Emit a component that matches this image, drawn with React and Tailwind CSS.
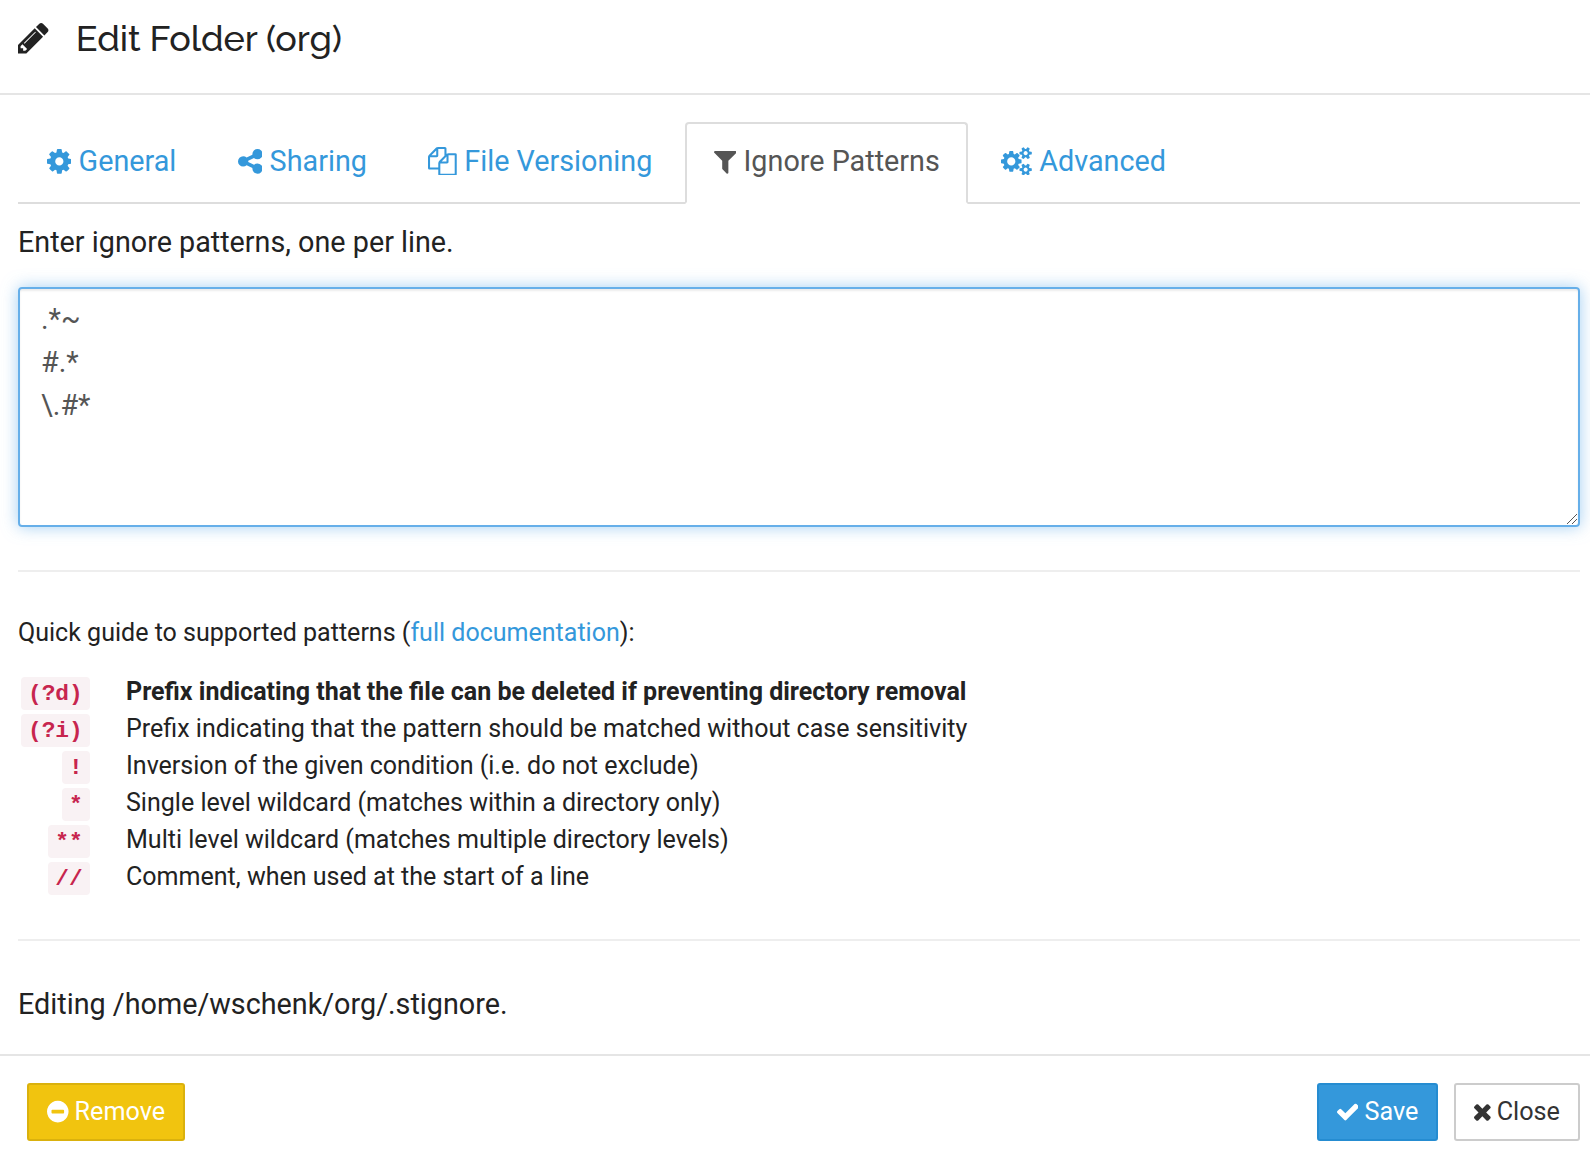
import React from 'react';

const ICONS = {
  pencil: {
    box: '128 0 1536 1792',
    d: 'M491 1536l91-91-235-235-91 91v107h128v128h107zm523-928q0-22-22-22-10 0-17 7l-542 542q-7 7-7 17 0 22 22 22 10 0 17-7l542-542q7-7 7-17zm-54-192l416 416-832 832h-416v-416zm683 96q0 53-37 90l-166 166-416-416 166-165q36-38 90-38 53 0 91 38l235 234q37 39 37 91z',
  },
  cog: {
    box: '128 0 1536 1792',
    d: 'M1152 896q0-106-75-181t-181-75-181 75-75 181 75 181 181 75 181-75 75-181zm512-109v222q0 12-8 23t-20 13l-185 28q-19 54-39 91 35 50 107 138 10 12 10 25t-9 23q-27 37-99 108t-94 71q-12 0-26-9l-138-108q-44 23-91 38-16 136-29 186-7 28-36 28h-222q-14 0-24.5-8.5t-11.5-21.5l-28-184q-49-16-90-37l-141 107q-10 9-25 9-14 0-25-11-126-114-165-168-7-10-7-23 0-12 8-23 15-21 51-66.5t54-70.5q-27-50-41-99l-183-27q-13-2-21-12.5t-8-23.5v-222q0-12 8-23t19-13l186-28q14-46 39-92-40-57-107-138-10-12-10-24 0-10 9-23 26-36 98.5-107.5t94.5-71.5q13 0 26 10l138 107q44-23 91-38 16-136 29-186 7-28 36-28h222q14 0 24.5 8.5t11.5 21.5l28 184q49 16 90 37l142-107q9-9 24-9 13 0 25 10 129 119 165 170 7 8 7 22 0 12-8 23-15 21-51 66.5t-54 70.5q26 50 41 98l183 28q13 2 21 12.5t8 23.5z',
  },
  share: {
    box: '128 0 1536 1792',
    d: 'M1344 1024q133 0 226.5 93.5t93.5 226.5-93.5 226.5-226.5 93.5-226.5-93.5-93.5-226.5q0-12 2-34l-360-180q-92 86-218 86-133 0-226.5-93.5t-93.5-226.5 93.5-226.5 226.5-93.5q126 0 218 86l360-180q-2-22-2-34 0-133 93.5-226.5t226.5-93.5 226.5 93.5 93.5 226.5-93.5 226.5-226.5 93.5q-126 0-218-86l-360 180q2 22 2 34t-2 34l360 180q92-86 218-86z',
  },
  files: {
    box: '0 0 1792 1792',
    d: 'M1696 384q40 0 68 28t28 68v1216q0 40-28 68t-68 28h-960q-40 0-68-28t-28-68v-288h-544q-40 0-68-28t-28-68v-672q0-40 20-88t48-76l408-408q28-28 76-48t88-20h416q40 0 68 28t28 68v328q68-40 128-40h416zm-544 213l-299 299h299v-299zm-640-384l-299 299h299v-299zm196 647l316-316v-416h-384v416q0 40-28 68t-68 28h-416v640h512v-256q0-40 20-88t48-76zm956 804v-1152h-384v416q0 40-28 68t-68 28h-416v640h896z',
  },
  filter: {
    box: '192 0 1408 1792',
    d: 'M1595 295q17 41-14 70l-493 493v742q0 42-39 59-13 5-25 5-27 0-45-19l-256-256q-19-19-19-45v-486l-493-493q-31-29-14-70 17-39 59-39h1280q42 0 59 39z',
  },
  cogs: {
    box: '-64 0 1920 1792',
    d: 'M832 896q0-106-75-181t-181-75-181 75-75 181 75 181 181 75 181-75 75-181zm768 512q0-52-38-90t-90-38-90 38-38 90q0 53 37.5 90.5t90.5 37.5 90.5-37.5 37.5-90.5zm0-1024q0-52-38-90t-90-38-90 38-38 90q0 53 37.5 90.5t90.5 37.5 90.5-37.5 37.5-90.5zm-384 421v185q0 10-7 19.5t-16 10.5l-155 24q-11 35-32 76 34 48 90 115 7 11 7 20 0 12-7 19-23 30-82.5 89.5t-78.5 59.5q-11 0-21-7l-115-90q-37 19-77 31-11 108-23 155-7 24-30 24h-186q-11 0-20-7.5t-10-17.5l-23-153q-34-10-75-31l-118 89q-7 7-20 7-11 0-21-8-144-133-144-160 0-9 7-19 10-14 41-53t47-61q-23-44-35-82l-152-24q-10-1-17-9.5t-7-19.5v-185q0-10 7-19.5t16-10.5l155-24q11-35 32-76-34-48-90-115-7-11-7-20 0-12 7-20 22-30 82-89t79-59q11 0 21 7l115 90q34-18 77-32 11-108 23-154 7-24 30-24h186q11 0 20 7.5t10 17.5l23 153q34 10 75 31l118-89q8-7 20-7 11 0 21 8 144 133 144 160 0 8-7 19-12 16-42 54t-45 60q23 48 34 82l152 23q10 2 17 10.5t7 19.5zm640 533v140q0 16-149 31-12 27-30 52 51 113 51 138 0 4-4 7-122 71-124 71-8 0-46-47t-52-68q-20 2-30 2t-30-2q-14 21-52 68t-46 47q-2 0-124-71-4-3-4-7 0-25 51-138-18-25-30-52-149-15-149-31v-140q0-16 149-31 13-29 30-52-51-113-51-138 0-4 4-7 4-2 35-20t59-34 30-16q8 0 46 46.5t52 67.5q20-2 30-2t30 2q51-71 92-112l6-2q4 0 124 70 4 3 4 7 0 25-51 138 17 23 30 52 149 15 149 31zm0-1024v140q0 16-149 31-12 27-30 52 51 113 51 138 0 4-4 7-122 71-124 71-8 0-46-47t-52-68q-20 2-30 2t-30-2q-14 21-52 68t-46 47q-2 0-124-71-4-3-4-7 0-25 51-138-18-25-30-52-149-15-149-31v-140q0-16 149-31 13-29 30-52-51-113-51-138 0-4 4-7 4-2 35-20t59-34 30-16q8 0 46 46.5t52 67.5q20-2 30-2t30 2q51-71 92-112l6-2q4 0 124 70 4 3 4 7 0 25-51 138 17 23 30 52 149 15 149 31z',
  },
  minus: {
    box: '128 0 1536 1792',
    d: 'M1344 960v-128q0-26-19-45t-45-19h-768q-26 0-45 19t-19 45v128q0 26 19 45t45 19h768q26 0 45-19t19-45zm320-64q0 209-103 385.5t-279.5 279.5-385.5 103-385.5-103-279.5-279.5-103-385.5 103-385.5 279.5-279.5 385.5-103 385.5 103 279.5 279.5 103 385.5z',
  },
  check: {
    box: '121 0 1550 1792',
    d: 'M1671 566q0 40-28 68l-724 724-136 136q-28 28-68 28t-68-28l-136-136-362-362q-28-28-28-68t28-68l136-136q28-28 68-28t68 28l294 295 656-657q28-28 68-28t68 28l136 136q28 28 28 68z',
  },
  times: {
    box: '302 0 1188 1792',
    d: 'M1490 1322q0 40-28 68l-136 136q-28 28-68 28t-68-28l-294-294-294 294q-28 28-68 28t-68-28l-136-136q-28-28-28-68t28-68l294-294-294-294q-28-28-28-68t28-68l136-136q28-28 68-28t68 28l294 294 294-294q28-28 68-28t68 28l136 136q28 28 28 68t-28 68l-294 294 294 294q28 28 28 68z',
  },
};

function Icon({ name, className }) {
  const { box, d } = ICONS[name];
  return (
    <svg viewBox={box} fill="currentColor" aria-hidden="true" className={`w-auto shrink-0 ${className}`}>
      <path d={d} />
    </svg>
  );
}

const TABS = [
  { label: 'General', icon: 'cog' },
  { label: 'Sharing', icon: 'share' },
  { label: 'File Versioning', icon: 'files' },
  { label: 'Ignore Patterns', icon: 'filter', active: true },
  { label: 'Advanced', icon: 'cogs' },
];

const PATTERNS = [
  { code: '(?d)', text: 'Prefix indicating that the file can be deleted if preventing directory removal', bold: true },
  { code: '(?i)', text: 'Prefix indicating that the pattern should be matched without case sensitivity' },
  { code: '!', text: 'Inversion of the given condition (i.e. do not exclude)' },
  { code: '*', text: 'Single level wildcard (matches within a directory only)' },
  { code: '**', text: 'Multi level wildcard (matches multiple directory levels)' },
  { code: '//', text: 'Comment, when used at the start of a line' },
];

function Tab({ label, icon, active }) {
  return (
    <li className="-mb-[2px] mr-1">
      <a
        className={`flex h-[82px] items-start gap-[7.25px] rounded-t-[4px] border-2 px-[26.7px] pt-[17px] leading-[40px] ${
          active ? 'border-[#ddd] border-b-white bg-white text-[#555]' : 'border-transparent text-[#3498db]'
        }`}
      >
        <Icon name={icon} className="mt-[5.5px] h-[28.75px]" />
        {label}
      </a>
    </li>
  );
}

function Button({ icon, className, children }) {
  return (
    <button
      className={`flex h-[58px] items-center justify-center gap-[6px] rounded-[3px] border-2 text-[25.2px] leading-none ${className}`}
    >
      <Icon name={icon} className="h-[25.2px]" />
      {children}
    </button>
  );
}

export default function App() {
  return (
    <div className="flex h-[1162px] w-[1590px] flex-col overflow-hidden bg-white font-['Roboto',sans-serif] text-[28.75px] text-[#222]">
      <header className="flex h-[95px] shrink-0 items-start gap-[27px] border-b-2 border-[#e5e5e5] pl-[18px] pt-[14px]">
        <Icon name="pencil" className="mt-[6px] h-[36px]" />
        <h4 className="font-['Raleway','Lato',sans-serif] text-[36px] font-medium leading-[48px] tracking-[-0.08px]">
          Edit Folder (org)
        </h4>
      </header>

      <main className="flex h-[959px] shrink-0 flex-col px-[18px] pr-[10px] pt-[27px]">
        <ul className="flex h-[82px] shrink-0 border-b-2 border-[#ddd]">
          {TABS.map((tab) => (
            <Tab key={tab.label} {...tab} />
          ))}
        </ul>

        <p className="mt-[18px] h-[40px] leading-[40px]">Enter ignore patterns, one per line.</p>

        <div className="relative mt-[25px] h-[240px] shrink-0">
          <textarea
            spellCheck={false}
            className="block h-full w-full resize-none rounded-[4px] border-2 border-[#66afe9] px-[21px] py-[9px] leading-[42.86px] text-[#555] shadow-[inset_0_2px_2px_rgba(0,0,0,0.075),0_0_16px_rgba(102,175,233,0.6)] outline-none"
            defaultValue={'.*~\n#.*\n\\.#*'}
          />
          <svg
            viewBox="0 0 10 10"
            shapeRendering="crispEdges"
            className="pointer-events-none absolute bottom-[3px] right-[3px] size-[10px]"
            stroke="#555"
            fill="none"
          >
            <path d="M0 10L10 0M5 10L10 5" />
          </svg>
        </div>

        <hr className="mt-[43px] border-t-2 border-[#eee]" />

        <section className="text-[25.04px]">
          <p className="mt-[42px] leading-[37px]">
            Quick guide to supported patterns (<a className="text-[#3498db]">full documentation</a>):
          </p>
          <dl className="mt-[22px]">
            {PATTERNS.map(({ code, text, bold }) => (
              <div key={code} className="flex h-[37px] items-start">
                <dt className="flex w-[72px] justify-end pt-[4px]">
                  <code className="h-[33px] rounded-[4px] bg-[#f9f2f4] px-[7.3px] font-['Liberation_Mono',monospace] text-[22.8px] font-bold leading-[34px] text-[#c7254e]">
                    {code}
                  </code>
                </dt>
                <dd className={`ml-[36px] leading-[37px] ${bold ? 'font-bold' : ''}`}>{text}</dd>
              </div>
            ))}
          </dl>
        </section>

        <hr className="mt-[44px] border-t-2 border-[#eee]" />

        <p className="mt-[43px] leading-[40px]">Editing /home/wschenk/org/.stignore.</p>
      </main>

      <footer className="flex h-[108px] shrink-0 items-start border-t-2 border-[#e5e5e5] pl-[27px] pr-[10px] pt-[27px]">
        <Button icon="minus" className="w-[158px] border-[#dab10d] bg-[#f1c40f] text-white">
          Remove
        </Button>
        <Button icon="check" className="ml-auto w-[121px] border-[#258cd1] bg-[#3498db] text-white">
          Save
        </Button>
        <Button icon="times" className="ml-4 w-[126px] border-[#ccc] bg-white text-[#333]">
          Close
        </Button>
      </footer>
    </div>
  );
}
